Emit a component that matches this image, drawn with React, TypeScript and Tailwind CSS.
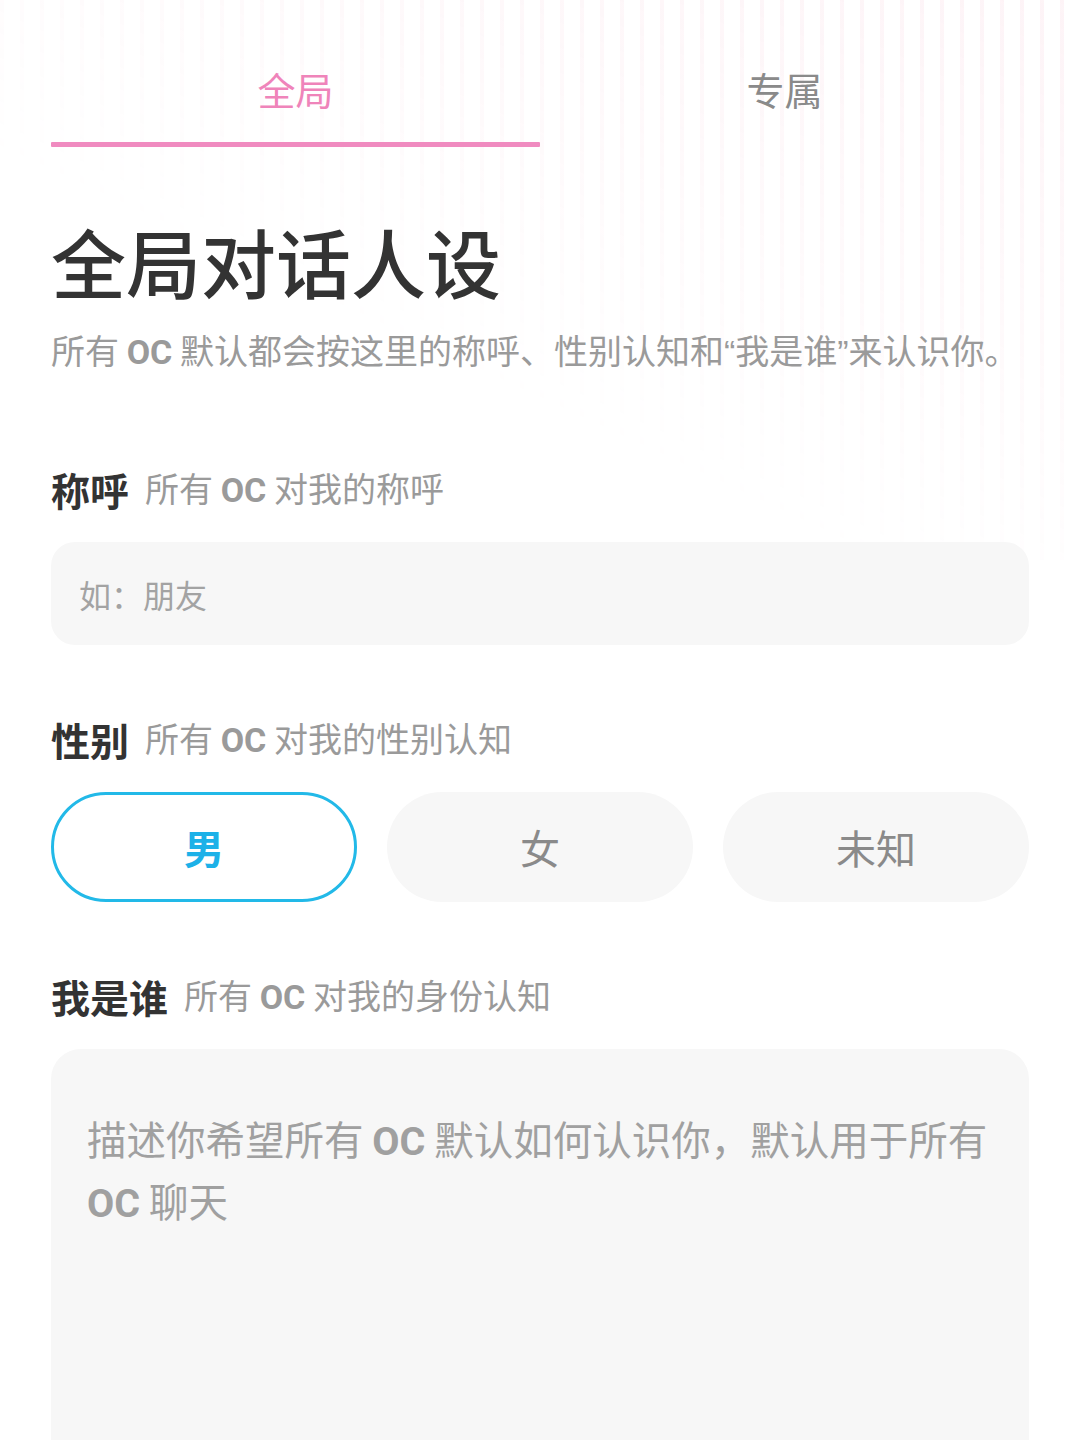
import React from "react";

const FONT = { fontFamily: '"Noto Sans CJK SC", "Noto Sans", sans-serif' };

function OC() {
  return <span className="font-bold" style={{ fontFamily: 'Roboto, "Noto Sans CJK SC", sans-serif' }}>OC</span>;
}

function Q({ c }: { c: string }) {
  return <span style={{ fontFamily: '"Liberation Sans", sans-serif' }}>{c}</span>;
}

function Label({ title, sub }: { title: string; sub: React.ReactNode }) {
  return (
    <div className="flex items-center h-[48px]">
      <span className="text-[39px] leading-[48px] font-bold text-[#333333]">{title}</span>
      <span className="ml-[16px] text-[34px] leading-[48px] text-[#9a9a9a]">{sub}</span>
    </div>
  );
}

export default function App() {
  return (
    <div className="relative w-[1080px] h-[1440px] overflow-hidden bg-white" style={FONT}>
      <div className="absolute inset-x-0 top-0 h-[560px] pointer-events-none bg-[repeating-linear-gradient(90deg,rgba(238,150,178,0.11)_0px,rgba(238,150,178,0.11)_4px,transparent_4px,transparent_20px)] [mask-image:linear-gradient(205deg,rgba(0,0,0,1)_0%,rgba(0,0,0,0.55)_30%,rgba(0,0,0,0)_62%)]" />
      <div className="relative flex flex-col px-[51px]">
        {/* Tabs */}
        <div className="flex w-[978px]">
          <div className="flex-1 flex flex-col items-center">
            <span className="mt-[70px] text-[38px] leading-[38px] text-[#ef84ba]">全局</span>
            <div className="mt-[34px] h-[5px] w-full bg-[#f08bc0] rounded-[1px]" />
          </div>
          <div className="flex-1 flex flex-col items-center">
            <span className="mt-[70px] text-[38px] leading-[38px] text-[#8a8a8a]">专属</span>
          </div>
        </div>

        {/* Title */}
        <div className="mt-[69px] text-[75px] leading-[90px] font-medium text-[#333333]">全局对话人设</div>
        <div className="mt-[20px] text-[34px] leading-[48px] text-[#9a9a9a] whitespace-nowrap">
          所有 <OC /> 默认都会按这里的称呼、性别认知和<Q c="“" />我是谁<Q c="”" />来认识你。
        </div>

        {/* 称呼 */}
        <div className="mt-[89px]">
          <Label title="称呼" sub={<>所有 <OC /> 对我的称呼</>} />
        </div>
        <div className="mt-[29px] h-[103px] w-[978px] rounded-[24px] bg-[#f7f7f7] flex items-center pl-[28px]">
          <span className="text-[32px] text-[#a3a3a3]">如：朋友</span>
        </div>

        {/* 性别 */}
        <div className="mt-[70px]">
          <Label title="性别" sub={<>所有 <OC /> 对我的性别认知</>} />
        </div>
        <div className="mt-[29px] grid grid-cols-3 gap-[30px] w-[978px]">
          <div className="h-[110px] rounded-full border-[3px] border-[#22b9e8] bg-white flex items-center justify-center">
            <span className="text-[40px] font-bold text-[#1cb1e8]">男</span>
          </div>
          <div className="h-[110px] rounded-full bg-[#f7f7f7] flex items-center justify-center">
            <span className="text-[40px] text-[#8a8a8a]">女</span>
          </div>
          <div className="h-[110px] rounded-full bg-[#f7f7f7] flex items-center justify-center">
            <span className="text-[40px] text-[#8a8a8a]">未知</span>
          </div>
        </div>

        {/* 我是谁 */}
        <div className="mt-[70px]">
          <Label title="我是谁" sub={<>所有 <OC /> 对我的身份认知</>} />
        </div>
        <div className="mt-[29px] h-[520px] w-[978px] rounded-[30px] bg-[#f7f7f7] pt-[60px] pl-[36px] pr-[20px]">
          <div className="text-[39.5px] leading-[58px] text-[#a0a0a0] whitespace-nowrap">
            描述你希望所有 <OC /> 默认如何认识你，默认用于所有
            <br />
            <OC /> 聊天
          </div>
        </div>
      </div>
    </div>
  );
}
